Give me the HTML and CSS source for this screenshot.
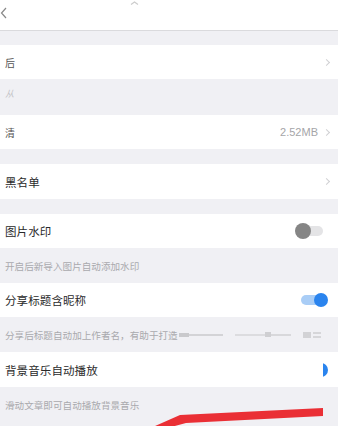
FILE: index.html
```html
<!DOCTYPE html>
<html lang="zh">
<head>
<meta charset="utf-8">
<link rel="stylesheet" href="styles.css">
</head>
<body>
<div class="page">
  <div class="nav">
    <svg class="back" width="8" height="12" viewBox="0 0 8 12"><path d="M6 1 L1.5 6 L6 11" fill="none" stroke="#888" stroke-width="1.2"/></svg>
    <svg class="pull" width="9" height="4" viewBox="0 0 9 4"><path d="M1 3.5 L4.5 1 L8 3.5" fill="none" stroke="#ccc" stroke-width="1.2"/></svg>
  </div>
  <div class="gap g14"></div>
  <div class="row h34"><span class="label part">后</span><span class="right"><span class="chev"></span></span></div>
  <div class="cap cap-top"><span class="faint">从</span></div>
  <div class="row h34"><span class="label part">清</span><span class="right"><span class="val">2.52MB</span><span class="chev"></span></span></div>
  <div class="gap g15"></div>
  <div class="row h35"><span class="label">黑名单</span><span class="right"><span class="chev"></span></span></div>
  <div class="gap g15"></div>
  <div class="row h34"><span class="label">图片水印</span><span class="right"><span class="toggle off"><span class="knob"></span></span></span></div>
  <div class="cap h35">开启后新导入图片自动添加水印</div>
  <div class="row h34"><span class="label">分享标题含昵称</span><span class="right"><span class="toggle on"><span class="knob"></span></span></span></div>
  <div class="cap h35">分享后标题自动加上作者名，有助于打造<svg class="smear" width="144" height="10" viewBox="0 0 144 10"><rect x="0" y="3" width="10" height="4" fill="#c9c9cc"/><rect x="10" y="4" width="34" height="2" fill="#d3d3d6"/><rect x="56" y="4" width="30" height="2" fill="#dcdcdf"/><rect x="86" y="2" width="6" height="5" fill="#cfcfd2"/><rect x="92" y="4" width="20" height="2" fill="#d8d8db"/><rect x="124" y="2" width="8" height="6" fill="#d2d2d5"/><rect x="134" y="2" width="8" height="2" fill="#d6d6d9"/><rect x="134" y="6" width="8" height="2" fill="#d6d6d9"/></svg></div>
  <div class="row h35"><span class="label">背景音乐自动播放</span><span class="right"><span class="half"><span class="dot"></span></span></span></div>
  <div class="cap h35">滑动文章即可自动播放背景音乐</div>
  <svg class="mark" width="338" height="426" viewBox="0 0 338 426"><polygon points="323,408 323,416 186,423 160,430 146,430 180,415" fill="#ea2f35"/></svg>
</div>
</body>
</html>
```
FILE: styles.css
```css
html, body {
  margin: 0;
  padding: 0;
  background: #f0f0f4;
}
.page {
  position: relative;
  width: 338px;
  height: 426px;
  overflow: hidden;
  font-family: "Noto Sans CJK SC", "Noto Sans", sans-serif;
  background: #f0f0f4;
}
.nav {
  position: relative;
  height: 30px;
  background: #fff;
  border-bottom: 1px solid #dadadd;
  display: flex;
  align-items: flex-start;
}
.back {
  margin: 7px 0 0 0;
}
.pull {
  margin: 1px 0 0 122px;
}
.gap.g14 { height: 14px; }
.gap.g15 { height: 15px; }
.row {
  background: #fff;
  display: flex;
  align-items: center;
  justify-content: space-between;
  padding: 0 8px 0 5px;
  box-sizing: border-box;
}
.h34 { height: 34px; }
.h35 { height: 35px; }
.label {
  font-size: 11.5px;
  color: #2a2a2a;
  letter-spacing: 0.1px;
}
.label.part {
  font-size: 10px;
  color: #555;
}
.right {
  display: flex;
  align-items: center;
  gap: 6px;
}
.val {
  font-family: "Liberation Sans", sans-serif;
  font-size: 11px;
  color: #a5a5a8;
}
.chev {
  width: 4px;
  height: 4px;
  border-top: 1.2px solid #d0d0d3;
  border-right: 1.2px solid #d0d0d3;
  transform: rotate(45deg);
  margin-right: 1px;
}
.cap {
  display: flex;
  align-items: center;
  padding-left: 5px;
  font-size: 9.6px;
  color: #a9a9ad;
  white-space: nowrap;
}
.cap-top {
  height: 36px;
  padding-bottom: 8px;
  box-sizing: border-box;
}
.faint {
  font-style: italic;
  color: #c2c2c6;
  font-size: 9px;
}
.smear {
  margin-left: 1px;
}
.toggle {
  position: relative;
  display: block;
  width: 28px;
  height: 16px;
  margin-right: 7px;
}
.toggle::before {
  content: "";
  position: absolute;
  left: 4px;
  right: 0;
  top: 3px;
  height: 10px;
  border-radius: 5px;
}
.toggle .knob {
  position: absolute;
  top: 0;
  width: 16px;
  height: 16px;
  border-radius: 50%;
}
.toggle.off::before { background: #e4e4e6; }
.toggle.off .knob { left: 0; background: #858585; }
.toggle.on { width: 27px; margin-right: 2px; }
.toggle.on::before { background: #a9cdf6; left: 0; right: 6px; }
.toggle.on .knob { right: 0; top: 1px; width: 14px; height: 14px; background: #2a84ee; }
.half {
  display: block;
  width: 5px;
  height: 14px;
  overflow: hidden;
  margin-right: 2px;
}
.half .dot {
  display: block;
  width: 14px;
  height: 14px;
  margin-left: -9px;
  border-radius: 50%;
  background: #2a84ee;
}
.mark {
  position: absolute;
  left: 0;
  top: 0;
  pointer-events: none;
}
```
